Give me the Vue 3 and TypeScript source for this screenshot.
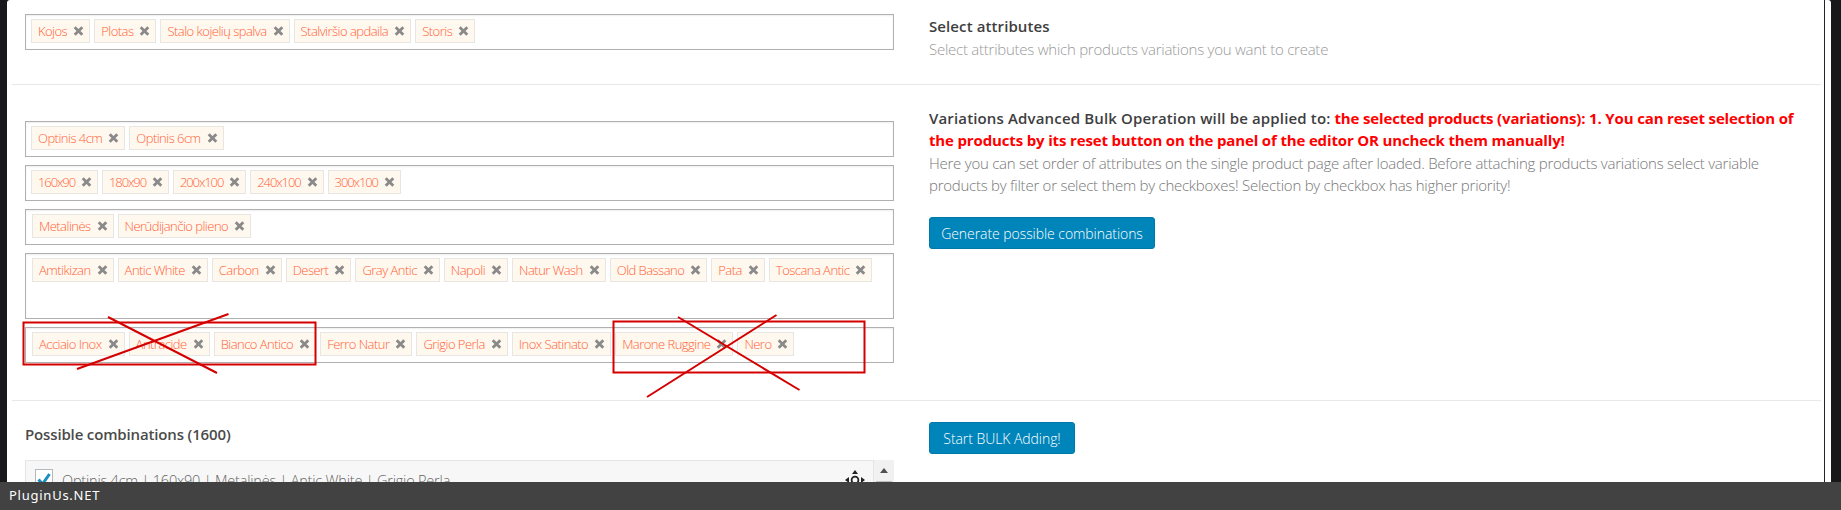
<template>
  <div class="screen">
    <div class="panel">
      <div class="panel__inner">
        <section class="section section--first">
          <div class="section__left">
            <div class="tag-box">
              <span v-for="tag in attributes" :key="tag" class="tag">
                {{ tag }}
                <svg class="tag__x" viewBox="0 0 10 10" aria-hidden="true"><path d="M1.2 1.2l7.6 7.6M8.8 1.2l-7.6 7.6" /></svg>
              </span>
            </div>
          </div>
          <div class="section__right">
            <div class="title">Select attributes</div>
            <div class="desc">Select attributes which products variations you want to create</div>
          </div>
        </section>

        <section class="section section--second">
          <div class="section__left section__left--stack">
            <div
              v-for="(row, idx) in tagRows"
              :key="idx"
              class="tag-box"
              :class="{ 'tag-box--tall': row.length === 10, 'tag-box--inset': idx > 1, 'tag-box--num': idx === 1 }"
            >
              <span v-for="tag in row" :key="tag" class="tag">
                {{ tag }}
                <svg class="tag__x" viewBox="0 0 10 10" aria-hidden="true"><path d="M1.2 1.2l7.6 7.6M8.8 1.2l-7.6 7.6" /></svg>
              </span>
            </div>
          </div>
          <div class="section__right section__right--text">
            <p class="notice">
              Variations Advanced Bulk Operation will be applied to:
              <span class="notice__red">the selected products (variations): 1. You can reset selection of the products by its reset button on the panel of the editor OR uncheck them manually!</span>
            </p>
            <p class="desc">Here you can set order of attributes on the single product page after loaded. Before attaching products variations select variable products by filter or select them by checkboxes! Selection by checkbox has higher priority!</p>
            <button type="button" class="btn btn--generate">Generate possible combinations</button>
          </div>
        </section>

        <section class="section section--third">
          <div class="section__left">
            <div class="title title--combos">Possible combinations (1600)</div>
            <div class="combos">
              <div class="combos__item">
                <svg class="check" viewBox="0 0 18 21" aria-hidden="true">
                  <rect x="0.5" y="0.5" width="17" height="20" fill="#fff" stroke="#b4b9be" />
                  <path d="M3.5 10.5l4 4.5 7-10" fill="none" stroke="#1e8cbe" stroke-width="3" />
                </svg>
                <span class="combos__label">Optinis 4cm | 160x90 | Metalinės | Antic White | Grigio Perla</span>
                <svg class="move" viewBox="0 0 22 22" aria-hidden="true">
                  <path d="M11 1l3 4H8zM1 11l4-3v6zM21 11l-4-3v6zM11 21l3-4H8z" fill="#222" />
                  <circle cx="11" cy="11" r="3.4" fill="none" stroke="#222" stroke-width="1.8" />
                </svg>
              </div>
              <div class="combos__scroll">
                <span class="combos__arrow"></span>
                <span class="combos__thumb"></span>
              </div>
            </div>
          </div>
          <div class="section__right section__right--btn">
            <button type="button" class="btn btn--start">Start BULK Adding!</button>
          </div>
        </section>
      </div>
    </div>

    <svg class="marks" width="1841" height="510" viewBox="0 0 1841 510" aria-hidden="true">
      <rect x="23.5" y="322.5" width="292" height="42" />
      <path d="M108 317L217 373M228.5 314L77 369" />
      <rect x="613.5" y="321.5" width="251" height="51" />
      <path d="M678 317L799.5 390M776.5 315L647 397" />
    </svg>

    <div class="brand">PluginUs.NET</div>
  </div>
</template>

<script setup lang="ts">
const attributes: string[] = ['Kojos', 'Plotas', 'Stalo kojelių spalva', 'Stalviršio apdaila', 'Storis']

const tagRows: string[][] = [
  ['Optinis 4cm', 'Optinis 6cm'],
  ['160x90', '180x90', '200x100', '240x100', '300x100'],
  ['Metalinės', 'Nerūdijančio plieno'],
  ['Amtikizan', 'Antic White', 'Carbon', 'Desert', 'Gray Antic', 'Napoli', 'Natur Wash', 'Old Bassano', 'Pata', 'Toscana Antic'],
  ['Acciaio Inox', 'Antracide', 'Bianco Antico', 'Ferro Natur', 'Grigio Perla', 'Inox Satinato', 'Marone Ruggine', 'Nero'],
]
</script>

<style>
html,
body {
  margin: 0;
  background: #18181b;
}
</style>

<style scoped>
.screen {
  position: relative;
  width: 1841px;
  height: 510px;
  overflow: hidden;
  background: #18181b;
  font-family: "Open Sans", "Noto Sans", sans-serif;
  font-size: 15px;
  color: #444;
}

.panel {
  width: 1824px;
  height: 510px;
  margin-left: 7px;
  background: #fff;
  border-radius: 3px 3px 0 0;
}

.panel__inner {
  width: 1818px;
  height: 510px;
  box-sizing: border-box;
  border-right: 1px solid #23232a;
}

.section {
  display: grid;
  grid-template-columns: 869px 880px;
  column-gap: 35px;
  width: 1809px;
  box-sizing: border-box;
  margin-left: 5px;
  padding-left: 13px;
  border-bottom: 1px solid #e8e8e8;
}

.section--first {
  height: 85px;
  padding-top: 14px;
}

.section--second {
  height: 316px;
  padding-top: 36px;
}

.section--third {
  border-bottom: 0;
}

.section--first .section__right {
  padding-top: 1px;
}

.section__left--stack {
  display: flex;
  flex-direction: column;
  gap: 8px;
}

.section__right--text {
  margin-top: -14px;
}

.section__right--btn {
  padding-top: 21px;
}

.tag-box {
  display: flex;
  flex-wrap: wrap;
  align-content: flex-start;
  gap: 4px;
  height: 36px;
  box-sizing: border-box;
  padding: 4px 5px;
  border: 1px solid #b0b0b0;
  background: #fff;
  box-shadow: inset 0 1px 2px rgba(0, 0, 0, 0.07);
}

.tag-box--tall {
  height: 66px;
}

.tag-box--inset {
  padding-left: 6px;
}

.tag {
  display: inline-flex;
  align-items: center;
  justify-content: space-between;
  gap: 6px;
  height: 24px;
  box-sizing: border-box;
  padding: 0 5px 0 6px;
  border: 1px solid #e8e6e2;
  background: #fff8ef;
  color: #ff6236;
  font-size: 13px;
  font-weight: 300;
  letter-spacing: -0.53px;
  white-space: nowrap;
}

.tag-box--num .tag {
  letter-spacing: -1.1px;
}

.tag__x {
  width: 11px;
  height: 10px;
  flex: none;
  fill: none;
  stroke: #8a8a8a;
  stroke-width: 2.8;
}

.title {
  font-size: 15px;
  font-weight: 600;
  line-height: 22px;
  letter-spacing: 0.1px;
  color: #3e3e3e;
}

.title--combos {
  margin-top: 22px;
  margin-bottom: 15px;
  letter-spacing: -0.15px;
  color: #4a4a4a;
}

.desc {
  margin: 0;
  padding-top: 1px;
  font-size: 15px;
  font-weight: 300;
  line-height: 22px;
  letter-spacing: -0.25px;
  color: #777;
}

.section--first .desc {
  color: #999;
}

.notice {
  margin: 0;
  font-size: 15px;
  font-weight: 600;
  line-height: 22px;
  letter-spacing: 0.15px;
  color: #3e3e3e;
}

.notice__red {
  font-weight: 700;
  letter-spacing: -0.15px;
  color: #f00;
}

.btn {
  display: block;
  height: 32px;
  box-sizing: border-box;
  border: 1px solid #0079a8;
  border-radius: 3px;
  background: #0085ba;
  color: #fff;
  font-family: inherit;
  font-size: 14px;
  font-weight: 300;
  letter-spacing: -0.06px;
  padding: 0;
}

.btn--generate {
  width: 226px;
  margin-top: 21px;
}

.btn--start {
  width: 146px;
}

.combos {
  display: flex;
  height: 60px;
}

.combos__item {
  display: flex;
  align-items: flex-start;
  flex: 1;
  box-sizing: border-box;
  padding: 8px 7px 0 9px;
  border: 1px solid #e5e5e5;
  background: #f7f7f7;
}

.check {
  width: 18px;
  height: 21px;
  flex: none;
}

.combos__label {
  flex: 1;
  margin-left: 9px;
  margin-top: 1px;
  font-size: 14.5px;
  font-weight: 300;
  line-height: 22px;
  letter-spacing: -0.2px;
  color: #666;
}

.move {
  width: 22px;
  height: 22px;
  flex: none;
}

.combos__scroll {
  position: relative;
  width: 20px;
  background: #f1f1f1;
}

.combos__arrow {
  position: absolute;
  top: 8px;
  left: 6px;
  width: 0;
  height: 0;
  border-left: 4px solid transparent;
  border-right: 4px solid transparent;
  border-bottom: 5px solid #505050;
}

.combos__thumb {
  position: absolute;
  top: 21px;
  left: 2px;
  width: 16px;
  height: 30px;
  background: #c1c1c1;
}

.marks {
  position: absolute;
  top: 0;
  left: 0;
  fill: none;
  stroke: #d40000;
  stroke-width: 2;
}

.brand {
  position: absolute;
  left: 0;
  right: 0;
  bottom: 0;
  height: 28px;
  padding-left: 9px;
  background: #424242;
  color: #fff;
  font-family: "Noto Sans", sans-serif;
  font-size: 13px;
  line-height: 27px;
  letter-spacing: 0.75px;
}
</style>
